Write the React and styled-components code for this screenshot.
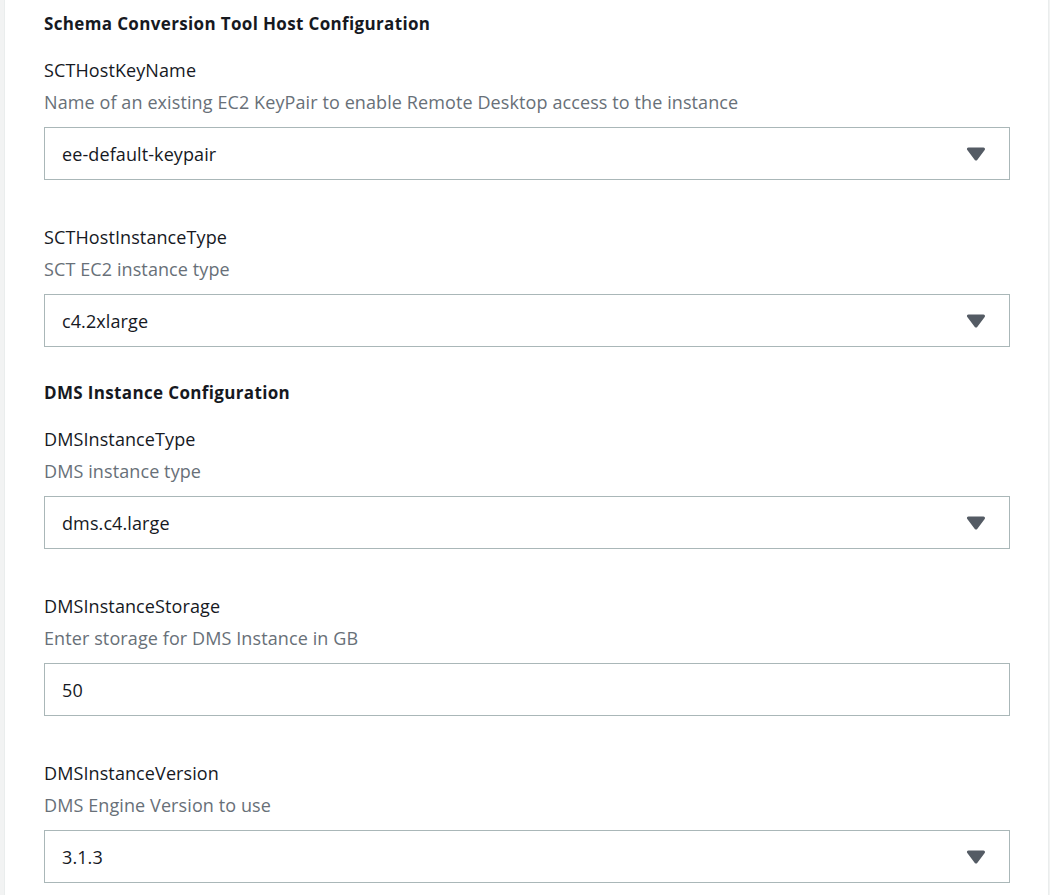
import React from 'react'
import styled, { createGlobalStyle } from 'styled-components'

const GlobalStyle = createGlobalStyle`
    body {
        margin: 0;
        background: #f2f3f3;
        font-family: "Open Sans", "Liberation Sans", sans-serif;
        color: #16191f;
    }
`

const sections = [
    {
        title: 'Schema Conversion Tool Host Configuration',
        fields: [
            { name: 'SCTHostKeyName', hint: 'Name of an existing EC2 KeyPair to enable Remote Desktop access to the instance', value: 'ee-default-keypair', select: true },
            { name: 'SCTHostInstanceType', hint: 'SCT EC2 instance type', value: 'c4.2xlarge', select: true },
        ],
    },
    {
        title: 'DMS Instance Configuration',
        fields: [
            { name: 'DMSInstanceType', hint: 'DMS instance type', value: 'dms.c4.large', select: true },
            { name: 'DMSInstanceStorage', hint: 'Enter storage for DMS Instance in GB', value: '50' },
            { name: 'DMSInstanceVersion', hint: 'DMS Engine Version to use', value: '3.1.3', select: true },
        ],
    },
]

const Caret = () => (
    <svg width="20" height="14" viewBox="0 0 20 14">
        <polygon points="2.5,2 17.5,2 10,12" fill="#545b64" stroke="#545b64" strokeWidth="3" strokeLinejoin="round" />
    </svg>
)

const App = () => {
    return (
        <>
            <GlobalStyle />
            <Panel>
                {sections.map((s) => (
                    <Section key={s.title}>
                        <Heading>{s.title}</Heading>
                        {s.fields.map((f) => (
                            <Field key={f.name}>
                                <Label>{f.name}</Label>
                                <Hint>{f.hint}</Hint>
                                <Control>
                                    <span>{f.value}</span>
                                    {f.select && <Caret />}
                                </Control>
                            </Field>
                        ))}
                    </Section>
                ))}
            </Panel>
        </>
    )
}

export default App

const Panel = styled.div`
    margin-left: 4px;
    width: 1045px;
    box-sizing: border-box;
    min-height: 100vh;
    background: #fff;
    border-left: 1px solid #eaeded;
    border-right: 1px solid #eaeded;
    padding: 12px 38px 40px 39px;
`

const Section = styled.section`
    & + & {
        margin-top: 34px;
    }
`

const Heading = styled.h3`
    margin: 0 0 22px;
    font-size: 17px;
    line-height: 24px;
    font-weight: 700;
    letter-spacing: 0.35px;
`

const Field = styled.div`
    & + & {
        margin-top: 45px;
    }
`

const Label = styled.div`
    font-size: 18px;
    line-height: 24px;
    letter-spacing: 0.1px;
`

const Hint = styled.div`
    margin-top: 8px;
    font-size: 18px;
    line-height: 24px;
    letter-spacing: 0.1px;
    color: #687078;
`

const Control = styled.div`
    margin-top: 13px;
    height: 53px;
    box-sizing: border-box;
    border: 1px solid #aab7b8;
    display: flex;
    align-items: center;
    justify-content: space-between;
    padding: 0 23px 0 17px;
    font-size: 18px;
    letter-spacing: 0.1px;
`
